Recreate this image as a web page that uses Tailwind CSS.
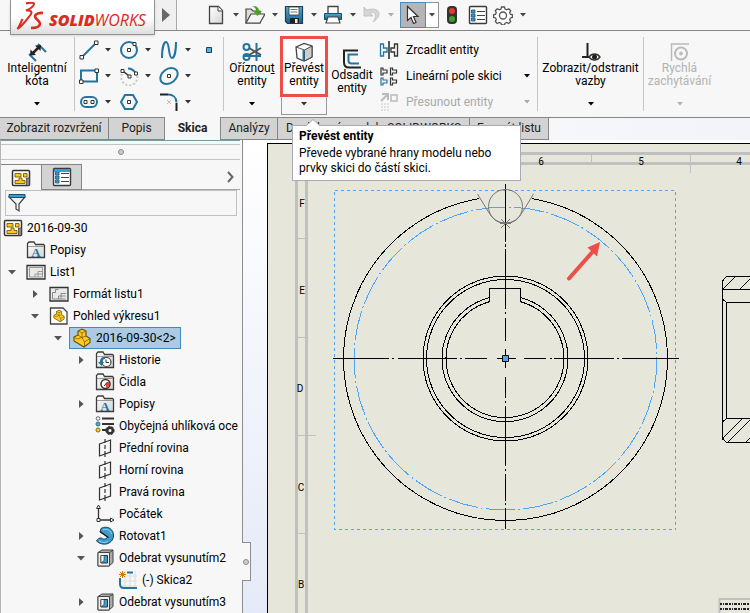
<!DOCTYPE html>
<html lang="cs">
<head>
  <meta charset="UTF-8" />
  <meta name="viewport" content="width=device-width, initial-scale=1.0" />
  <title>SOLIDWORKS</title>
  <script src="https://cdn.jsdelivr.net/npm/@tailwindcss/browser@4"></script>
  <style>
    body { font-family: Roboto, "Open Sans", sans-serif; }
  </style>
</head>
<body class="bg-[#f7f7f7] text-black text-xs min-h-screen flex flex-col overflow-hidden">

  <!-- shared icons -->
  <svg class="absolute size-0">
    <linearGradient id="blueFill" x1="0" y1="0" x2="0" y2="1"><stop offset="0" stop-color="#4fb0da" /><stop offset="1" stop-color="#17608a" /></linearGradient>
    <linearGradient id="paper" x1="0" y1="0" x2="1" y2="1"><stop offset="0" stop-color="#fff" /><stop offset="1" stop-color="#d5d5d5" /></linearGradient>
    <symbol id="down" viewBox="0 0 6 4"><path d="M0 0h6L3 3.6z" fill="currentColor" /></symbol>
    <symbol id="open" viewBox="0 0 8 5"><path d="M0 0h8L4 4.6z" fill="#555" /></symbol>
    <symbol id="closed" viewBox="0 0 5 8"><path d="M0 0v8L4.6 4z" fill="#555" /></symbol>
    <symbol id="folder" viewBox="0 0 20 20"><path d="M1.5 17.5V3.5L3 2h5l1.5 2.500H17.500l1 1v12z" fill="url(#paper)" stroke="#3c3c3c" stroke-width="1.300" /><path d="M2 6.500h16" stroke="#999" /></symbol>
    <symbol id="drawing" viewBox="0 0 20 20"><rect x="1.500" y="2.500" width="17" height="15" rx="1" fill="#fff" stroke="#333" stroke-width="1.500" /><path d="M4 5.500h6v3.500H4zM12.500 5.500h3.500v3.500h-3.500zM8 10h3v2.500h3v3H4v-3h4z" fill="#ffc916" stroke="#7b5a00" stroke-width=".9" /><path d="M15.500 10h3v7.500h-3z" fill="#888" stroke="#333" stroke-width=".7" /></symbol>
    <symbol id="part" viewBox="0 0 20 20"><path d="M2 9l4-2V3l4-2 4 2v5l4 2.500v4L12 19 2 13z" fill="#ffcb22" stroke="#6b4c00" stroke-width="1.100" /><path d="M6 7l4 2.500 4-1.500M10 9.500L12.500 14l5.500-3.500M12.500 14v5M2 9l3 2 5-1.500M6 3l4 2v4.500M10 5l4-2" fill="none" stroke="#805d00" stroke-width=".8" /></symbol>
    <symbol id="plane" viewBox="0 0 20 20"><path d="M4.500 6l11-4v12l-11 4zM10 1v4m0 2v4m0 2v6" fill="none" stroke="#333" stroke-width="1.200" /></symbol>
    <symbol id="cut" viewBox="0 0 20 20"><path d="M3 4.500L7 2h11v12.500L14 18H3z" fill="#aaa" stroke="#444" /><path d="M3 4.500h11.500V18H3z" fill="#eee" stroke="#444" /><path d="M6 7.500h6.500v7.500H6z" fill="#3b9dcb" stroke="#333" /><path d="M6 15l3-2.500V7.500H6z" fill="#fff" stroke="#333" stroke-width=".7" /><path d="M14.500 4.500L18 2" stroke="#444" /></symbol>
    <symbol id="letterA" viewBox="0 0 20 20"><use href="#folder" /><text x="10" y="16.500" text-anchor="middle" font-family="Liberation Serif, serif" font-weight="bold" font-size="13" fill="#22759f">A</text></symbol>
    <symbol id="list" viewBox="0 0 20 20"><rect x="1.500" y="1.500" width="17" height="17" rx="1" fill="#fff" stroke="#3a3a3a" stroke-width="1.400" /><path d="M9 6.500h8M9 10.500h8M9 14.500h8" stroke="#444" stroke-width="1.200" /><path d="M3.500 5h3.500v3H3.500zM3.500 9h3.500v3H3.500zM3.500 13h3.500v3H3.500z" fill="#3b9dcb" stroke="#174f70" stroke-width=".8" /></symbol>
  </svg>

  <header class="relative h-[31px] shrink-0 border-b border-[#858585] flex items-center">
    <div class="absolute left-[10px] top-0 z-10 h-[35px] w-[145px] border border-t-0 border-[#929292] bg-linear-to-b from-white from-50% to-[#dedede] flex items-end pb-1 pl-[5px] text-[#dc2a1e] shadow-sm">
      <svg class="w-7 h-7 shrink-0" viewBox="0 0 28 28" fill="none" stroke="#dc2a1e"><path d="M10 1.500C13 .5 18 0 18 2c0 2-4 5-8 6.500 5-.5 7 1 4 5-3 4-8 11-12.500 13.500 2-3 3.500-6.500 5-10" stroke-width="2" /><path d="M27 11c-4-.5-8 1-8 3.500s5 4 5 7-4 4.500-9 4.500" stroke-width="2.600" /></svg>
      <span class="text-base leading-5 italic pl-[5px] font-['Open_Sans']"><b class="font-extrabold">SOLID</b><span class="font-normal">WORKS</span></span>
    </div>
    <button aria-label="Nabídka" class="ml-[155px] w-[22px] h-[30px] border-r border-[#aaa] bg-[#f0f0f0] flex items-center justify-center"><svg class="w-[8px] h-[14px]" viewBox="0 0 8 14"><path d="M0 0v14l8-7z" fill="#686868" /></svg></button>

    <div class="ml-[29px] flex items-center text-[#444]">
      <button aria-label="Nový"><svg class="w-5 h-5" viewBox="0 0 20 20"><path d="M3.500 1.500h9l4 4v13h-13z" fill="url(#paper)" stroke="#444" stroke-width="1.300" /><path d="M12 1.500v4.500h4.500" fill="#fff" stroke="#444" /></svg></button>
      <button aria-label="Nový – možnosti" class="w-[19px] flex justify-center"><svg class="w-[6px] h-[4px]"><use href="#down" /></svg></button>
      <button aria-label="Otevřít"><svg class="w-5 h-5" viewBox="0 0 20 20"><path d="M1 18V4h5l2 2h7v12z" fill="#ddd" stroke="#444" stroke-width="1.200" /><path d="M1 18L6 9h14l-5 9z" fill="#f4f4f4" stroke="#444" stroke-width="1.200" /><path d="M7 1c5 0 7 2 7 5h3l-4.500 5L8 6h3c0-2-1-4-4-5z" fill="#4aa31c" /></svg></button>
      <button aria-label="Otevřít – možnosti" class="w-[19px] flex justify-center"><svg class="w-[6px] h-[4px]"><use href="#down" /></svg></button>
      <button aria-label="Uložit"><svg class="w-5 h-5" viewBox="0 0 20 20"><path d="M1.500 1.500h17v17h-15l-2-2z" fill="url(#blueFill)" stroke="#173f58" stroke-width="1.200" /><path d="M5 2h10v8H5z" fill="#fff" stroke="#333" stroke-width=".8" /><path d="M6.500 4.500h7M6.500 7h7" stroke="#777" /><path d="M6 13h9v5H6z" fill="#222" /><path d="M11 14h2.500v4H11z" fill="#eee" /></svg></button>
      <button aria-label="Uložit – možnosti" class="w-[19px] flex justify-center"><svg class="w-[6px] h-[4px]"><use href="#down" /></svg></button>
      <button aria-label="Tisk"><svg class="w-5 h-5" viewBox="0 0 20 20"><path d="M5 9V1.500h10V9" fill="#fff" stroke="#444" stroke-width="1.300" /><path d="M1.500 8.500h17v6h-17z" fill="url(#blueFill)" stroke="#174f70" /><path d="M5 12l-2 6h14l-2-6z" fill="#fff" stroke="#444" stroke-width="1.200" /></svg></button>
      <button aria-label="Tisk – možnosti" class="w-[19px] flex justify-center"><svg class="w-[6px] h-[4px]"><use href="#down" /></svg></button>
      <button aria-label="Zpět" disabled><svg class="w-5 h-5" viewBox="0 0 20 20"><path d="M2 2v9h9L8 8c5-2 8 2 3 9 10-6 7-16-6-12z" fill="#d6d6d6" stroke="#bbb" stroke-width=".8" /></svg></button>
      <button aria-label="Zpět – možnosti" disabled class="w-[18px] flex justify-center text-[#aaa]"><svg class="w-[6px] h-[4px]"><use href="#down" /></svg></button>
      <button aria-label="Vybrat" class="w-[26px] h-[26px] bg-[#b5b5b5] border border-[#4a8dbb] flex items-center justify-center"><svg class="w-5 h-5" viewBox="0 0 20 20"><path d="M4.500 1.500v14l3.500-3 2.500 6 2.500-1-2.500-6H15z" fill="#fff" stroke="#333" stroke-width="1.200" /></svg></button>
      <button aria-label="Vybrat – možnosti" class="w-[13px] h-[26px] border border-l-0 border-[#929292] bg-white flex items-center justify-center"><svg class="w-[6px] h-[4px]"><use href="#down" /></svg></button>
      <button aria-label="Obnovit" class="ml-[3px]"><svg class="w-5 h-5" viewBox="0 0 20 20"><rect x="5" y="1" width="10" height="18" rx="4" fill="#333" /><circle cx="10" cy="6" r="3" fill="#e8392b" /><circle cx="10" cy="14" r="3" fill="#39a32c" /></svg></button>
      <button aria-label="Vlastnosti" class="ml-[6px]"><svg class="w-5 h-5"><use href="#list" /></svg></button>
      <button aria-label="Možnosti" class="ml-[5px]"><svg class="w-5 h-5" viewBox="0 0 20 20" fill="#fff" stroke="#555" stroke-width="1.300"><path d="M8.500 2h3l.5 2 1.800.8 2-1.100 1.900 2-1 1.900.7 1.600 2 .6v2.600l-2 .6-.7 1.600 1 1.900-1.900 2-2-1.100-1.800.8-.5 1.800h-3l-.5-1.800-1.800-.8-2 1.100-1.900-2 1-1.900-.7-1.600-2-.6V9.800l2-.6.7-1.600-1-1.900 1.900-2 2 1.100L8 4z" /><circle cx="10" cy="10.500" r="3.500" /></svg></button>
      <button aria-label="Možnosti – nabídka" class="w-[19px] flex justify-center"><svg class="w-[6px] h-[4px]"><use href="#down" /></svg></button>
    </div>
  </header>

  <!-- ribbon -->
  <section class="h-[86px] shrink-0 flex leading-[13px] text-[#333]">
    <button class="w-[74px] flex flex-col items-center pt-[11px] text-black">
      <svg class="w-5 h-5" viewBox="0 0 20 20"><path d="M2 12l7 7M11 2l8 8" stroke="#22759f" stroke-width="2" /><path d="M5 12l7-7" stroke="#222" stroke-width="2.500" /><path d="M3 13.500l.5-6 5.500 5.500zM14 3l-.5 6L8 3.500z" fill="#222" /></svg>
      Inteligentní<br>kóta
      <svg class="w-[6px] h-[4px] mt-[14px]"><use href="#down" /></svg>
    </button>
    <div class="my-[6px] w-px bg-[#c6c6c6]"></div>

    <div class="grid grid-cols-[40px_40px_40px_24px] auto-rows-[26px] pt-[6px] pl-[4px]">
      <div class="flex items-center">
        <button aria-label="Přímka"><svg class="w-5 h-5" viewBox="0 0 20 20"><path d="M3 17L17 3" stroke="#22759f" stroke-width="2" /><path d="M1 15.500h3.500V19H1zM15.500 1H19v3.500h-3.500z" fill="#fff" stroke="#333" /></svg></button>
        <button aria-label="Přímka – možnosti" class="w-[18px] flex justify-center"><svg class="w-[6px] h-[4px]"><use href="#down" /></svg></button>
      </div>
      <div class="flex items-center">
        <button aria-label="Kružnice"><svg class="w-5 h-5" viewBox="0 0 20 20"><circle cx="10" cy="10" r="8" fill="none" stroke="#22759f" stroke-width="2" /><path d="M8.500 8.500h3v3h-3zM14 2.500h3v3h-3z" fill="#fff" stroke="#333" /></svg></button>
        <button aria-label="Kružnice – možnosti" class="w-[18px] flex justify-center"><svg class="w-[6px] h-[4px]"><use href="#down" /></svg></button>
      </div>
      <div class="flex items-center">
        <button aria-label="Splajn"><svg class="w-5 h-5" viewBox="0 0 20 20"><path d="M3 18C3 8 5 2 7 2c4 0 2 16 6 16 2 0 4-6 4-16" fill="none" stroke="#22759f" stroke-width="2" /></svg></button>
        <button aria-label="Splajn – možnosti" class="w-[18px] flex justify-center"><svg class="w-[6px] h-[4px]"><use href="#down" /></svg></button>
      </div>
      <button aria-label="Bod" class="flex items-center"><svg class="w-5 h-5" viewBox="0 0 20 20"><path d="M7.500 7.500h5v5h-5z" fill="#5ab2dc" stroke="#173f58" /></svg></button>

      <div class="flex items-center">
        <button aria-label="Obdélník"><svg class="w-5 h-5" viewBox="0 0 20 20"><path d="M2 4.500h16v11H2z" fill="none" stroke="#22759f" stroke-width="2" /><path d="M.5 14H4v3.500H.5zM16 3h3.500v3.500H16z" fill="#fff" stroke="#333" /></svg></button>
        <button aria-label="Obdélník – možnosti" class="w-[18px] flex justify-center"><svg class="w-[6px] h-[4px]"><use href="#down" /></svg></button>
      </div>
      <div class="flex items-center">
        <button aria-label="Oblouk"><svg class="w-5 h-5" viewBox="0 0 20 20"><path d="M3 8a8 8 0 1 0 15 1.500" fill="none" stroke="#c8c8c8" stroke-width="2" stroke-dasharray="2 2" /><path d="M9 2.500c4 0 6 2 8 5" fill="none" stroke="#22759f" stroke-width="2" /><path d="M4 5l6 5" stroke="#333" stroke-width="1.500" /><path d="M2 3.500h3v3H2zM9 9h3v3H9zM15.500 6h3v3h-3z" fill="#fff" stroke="#333" /></svg></button>
        <button aria-label="Oblouk – možnosti" class="w-[18px] flex justify-center"><svg class="w-[6px] h-[4px]"><use href="#down" /></svg></button>
      </div>
      <div class="flex items-center">
        <button aria-label="Elipsa"><svg class="w-5 h-5" viewBox="0 0 20 20"><ellipse cx="10" cy="10" rx="9.500" ry="7" transform="rotate(-38 10 10)" fill="none" stroke="#22759f" stroke-width="2" /><path d="M8.500 8.500h3v3h-3z" fill="#fff" stroke="#333" /></svg></button>
        <button aria-label="Elipsa – možnosti" class="w-[18px] flex justify-center"><svg class="w-[6px] h-[4px]"><use href="#down" /></svg></button>
      </div>
      <div></div>

      <div class="flex items-center">
        <button aria-label="Drážka"><svg class="w-5 h-5" viewBox="0 0 20 20"><rect x="2" y="5" width="16" height="10" rx="5" fill="none" stroke="#22759f" stroke-width="2" /><path d="M5 8.500h3v3H5zM12 8.500h3v3h-3z" fill="#fff" stroke="#333" /></svg></button>
        <button aria-label="Drážka – možnosti" class="w-[18px] flex justify-center"><svg class="w-[6px] h-[4px]"><use href="#down" /></svg></button>
      </div>
      <button aria-label="Mnohoúhelník" class="flex items-center"><svg class="w-5 h-5" viewBox="0 0 20 20"><path d="M6 3h8l4 7-4 7H6l-4-7z" fill="none" stroke="#22759f" stroke-width="2" /><path d="M8.500 8.500h3v3h-3z" fill="#fff" stroke="#333" /></svg></button>
      <div class="flex items-center">
        <button aria-label="Zaoblení"><svg class="w-5 h-5" viewBox="0 0 20 20" fill="none"><path d="M9 2.500c5 0 8.500 3 8.500 8" stroke="#22759f" stroke-width="2" /><path d="M1 2.500h8M17.500 11v8" stroke="#222" stroke-width="2" /><path d="M8 8l4 4m0-4l-4 4" stroke="#bbb" /></svg></button>
        <button aria-label="Zaoblení – možnosti" class="w-[18px] flex justify-center"><svg class="w-[6px] h-[4px]"><use href="#down" /></svg></button>
      </div>
    </div>
    <div class="my-[6px] w-px bg-[#c6c6c6]"></div>

    <button class="w-14 flex flex-col items-center pt-[11px] text-black">
      <svg class="w-5 h-5" viewBox="0 0 20 20" fill="none"><path d="M2 14h17M14.500 1v18" stroke="#22759f" stroke-width="2" /><circle cx="4.500" cy="5" r="3" stroke="#22759f" stroke-width="2" /><circle cx="4.500" cy="15" r="3" stroke="#22759f" stroke-width="2" /><path d="M7 6l12 7M7 13l12-7" stroke="#555" stroke-width="2" /></svg>
      <span>Oříznou<u>t</u><br>entity</span>
      <svg class="w-[6px] h-[4px] mt-[14px]"><use href="#down" /></svg>
    </button>
    <div class="w-12 pt-[5px] flex flex-col items-center">
      <button class="w-full h-[61px] border-3 border-[#ef4d47] bg-[#fdfdfd] text-black flex flex-col items-center pt-[3px]">
        <svg class="w-5 h-5" viewBox="0 0 20 20"><path d="M2 5l8-3.500L18 4v11l-8 4-7-3z" fill="#fff" stroke="#444" stroke-width="1.300" /><path d="M10.500 8L18 4v11l-7.500 4z" fill="#ccc" stroke="#444" /><path d="M2 5l8.500 3" stroke="#555" /><path d="M9.500 8v11" stroke="#22759f" stroke-width="2" /></svg>
        <span>Převést<br>entity</span>
      </button>
      <button aria-label="Převést entity – možnosti" class="w-[46px] h-[18px] border border-t-0 border-[#999] flex items-center justify-center pb-1"><svg class="w-[6px] h-[4px]"><use href="#down" /></svg></button>
    </div>
    <button class="w-12 flex flex-col items-center pt-[18px] text-black">
      <svg class="w-5 h-5" viewBox="0 0 20 20" fill="none"><path d="M16 1.500H2v12c0 3 2 5 5 5h12" stroke="#222" stroke-width="2" /><path d="M16 5.500H6.500v6c0 2 1 3 3 3H17" stroke="#22759f" stroke-width="2" /></svg>
      <span>Odsadit<br>entity</span>
    </button>
    <div class="w-[161px] pt-[6px] pl-[3px] text-black">
      <button class="h-[26px] flex items-center gap-[7px]">
        <svg class="w-5 h-5" viewBox="0 0 20 20" fill="none" stroke-width="1.300"><path d="M1.500 4v12h3v-4H8V8H4.500V4z" stroke="#22759f" /><path d="M18.500 4v12h-3v-4H12V8h3.500V4z" stroke="#333" /><path d="M10 1v18" stroke="#222" stroke-width="1.500" /></svg>
        Zrcadlit entity
      </button>
      <div class="h-[26px] flex items-center justify-between pr-[7px]">
        <button class="flex items-center gap-[7px]">
          <svg class="w-5 h-5" viewBox="0 0 20 20" fill="none" stroke-width="1.200"><path d="M2 12v7h2v-2h4v-3H4v-2z" stroke="#22759f" /><path d="M2 2v7h2V7h4V4H4V2zM11.500 2v7h2V7h4V4h-4V2zM11.500 12v7h2v-2h4v-3h-4v-2z" stroke="#333" /></svg>
          Lineární pole skici
        </button>
        <button aria-label="Lineární pole – možnosti"><svg class="w-[6px] h-[4px]"><use href="#down" /></svg></button>
      </div>
      <div class="h-[26px] flex items-center justify-between pr-[7px] text-[#a9a9a9]">
        <button disabled class="flex items-center gap-[7px]">
          <svg class="w-5 h-5" viewBox="0 0 20 20" fill="none"><path d="M2 9l6-6M3 2h6v6" stroke="#bbb" stroke-width="2" /><path d="M12 3h6v6h-6z" stroke="#bbb" stroke-width="1.500" /><path d="M2 12h8M2 15h8M2 18h8" stroke="#ccc" stroke-dasharray="2 1" /></svg>
          Přesunout entity
        </button>
        <button disabled aria-label="Přesunout – možnosti"><svg class="w-[6px] h-[4px]"><use href="#down" /></svg></button>
      </div>
    </div>
    <div class="my-[6px] w-px bg-[#c6c6c6]"></div>
    <button class="w-[105px] flex flex-col items-center pt-[11px] text-black">
      <svg class="w-5 h-5" viewBox="0 0 20 20" fill="none"><path d="M6.500 1v14M1 15h8" stroke="#222" stroke-width="2" /><path d="M8 15c3-4 8-4 11 0-3 4-8 4-11 0z" fill="#fff" stroke="#333" stroke-width="1.300" /><circle cx="13.500" cy="15" r="2.500" fill="#222" /></svg>
      <span>Zobrazit/odstranit<br>vazby</span>
      <svg class="w-[6px] h-[4px] mt-[14px]"><use href="#down" /></svg>
    </button>
    <div class="my-[6px] w-px bg-[#c6c6c6]"></div>
    <button disabled class="w-[71px] flex flex-col items-center pt-[11px] text-[#b3b3b3]">
      <svg class="w-5 h-5" viewBox="0 0 20 20" fill="none" stroke="#bbb"><path d="M1.500 19V2H19" stroke-width="1.500" /><circle cx="11" cy="11.500" r="6" stroke-width="2" /><circle cx="11" cy="11.500" r="1.500" fill="#bbb" /></svg>
      <span>Rychlá<br>zachytávání</span>
      <svg class="w-[6px] h-[4px] mt-[14px]"><use href="#down" /></svg>
    </button>
  </section>

  <!-- command tabs, with the tooltip hanging over them -->
  <nav class="relative h-[23px] shrink-0 flex bg-linear-to-r from-white to-[#f2f4f9] border-t border-[#858585] text-[#222] leading-[21px]">
    <button class="w-[109px] bg-[#d3d3d3] border-r border-b border-[#858585] whitespace-nowrap">Zobrazit rozvržení</button>
    <button class="w-[56px] bg-[#d3d3d3] border-r border-b border-[#858585]">Popis</button>
    <button class="w-[55px] -mt-px bg-[#f7f7f7] font-bold">Skica</button>
    <button class="w-[58px] bg-[#d3d3d3] border-x border-b border-[#858585]">Analýzy</button>
    <button class="w-[192px] bg-[#d3d3d3] border-r border-b border-[#858585] whitespace-nowrap">Doplňkové moduly SOLIDWORKS</button>
    <button class="w-[79px] bg-[#d3d3d3] border-r border-b border-[#858585] whitespace-nowrap">Formát listu</button>
    <div role="tooltip" class="absolute z-20 left-[292px] top-[7px] w-[229px] h-[56px] bg-white border border-[#a9aab4] px-[6px] pt-[3px] text-black leading-[15px]">
      <svg class="absolute left-[13px] -top-[7px] w-[14px] h-[8px]" viewBox="0 0 14 8"><path d="M0 7l7-6.500L14 7v1H0z" fill="#fff" /><path d="M0 7l7-6.500L14 7" fill="none" stroke="#a9aab4" /></svg>
      <b class="block mb-[2px]">Převést entity</b>
      <p class="whitespace-nowrap">Převede vybrané hrany modelu nebo<br>prvky skici do částí skici.</p>
    </div>
  </nav>

  <main class="flex-1 flex min-h-[473px] bg-linear-to-b from-white to-[#e6eaf8]">
    <aside class="relative w-[243px] shrink-0 bg-[#f7f7f7] border-r border-[#8d8d8d] border-l border-l-[#b5b5b5]">
      <div class="h-5 mr-[2px] border-t border-b border-t-[#7c9aa5] border-b-[#c4c4c4] pt-[3px]">
        <div class="border-t border-[#c4c4c4] flex justify-center pt-[4px]"><span class="size-[6px] rounded-full border border-[#8a8a8a] bg-[#ccc]"></span></div>
      </div>
      <div class="mt-1 h-[26px] mr-[2px] flex border-b border-[#a5a5a5]">
        <button aria-label="Strom prvků" class="w-[41px] h-[26px] border-t border-r border-[#858585] bg-[#f7f7f7] flex items-center justify-center"><svg class="w-5 h-5"><use href="#drawing" /></svg></button>
        <button aria-label="Správce vlastností" class="w-[40px] h-[26px] border border-l-0 border-[#858585] bg-[#d3d3d3] flex items-center justify-center"><svg class="w-5 h-5"><use href="#list" /><path d="M2 2h16v3H2z" fill="#3b9dcb" /></svg></button>
        <button aria-label="Další karty" class="ml-auto w-5 flex items-center justify-center"><svg class="w-[7px] h-[12px]" viewBox="0 0 7 12"><path d="M1 1l4.500 5L1 11" fill="none" stroke="#666" stroke-width="2" /></svg></button>
      </div>
      <label class="mx-1 mr-[5px] h-[26px] border border-[#c0c0c0] flex items-center pl-[2px]">
        <svg class="w-[18px] h-5 shrink-0" viewBox="0 0 18 20"><path d="M1 4h16l-6 7v7l-3-2v-5z" fill="#f2f2f2" stroke="#444" stroke-width="1.200" /><path d="M1 1.500h16v3H1z" fill="#3b9dcb" stroke="#174f70" /></svg>
        <input aria-label="Filtr" class="flex-1 min-w-0 h-full bg-transparent outline-none px-1">
      </label>

      <div class="overflow-hidden mt-px mr-[2px] pl-[2px] leading-[22px] whitespace-nowrap">
        <div class="h-[22px] flex items-center gap-1"><svg class="w-5 h-5 shrink-0"><use href="#drawing" /></svg>2016-09-30</div>
        <ul>
          <li class="h-[22px] flex items-center gap-1 pl-[23px]"><svg class="w-5 h-5 shrink-0"><use href="#letterA" /></svg>Popisy</li>
          <li>
            <div class="h-[22px] flex items-center gap-1"><span class="w-[19px] flex justify-center pr-px"><svg class="w-2 h-[5px]"><use href="#open" /></svg></span><svg class="w-5 h-5 shrink-0" viewBox="0 0 20 20"><path d="M1 3.500h18v13.500H1z" fill="#e9e9e9" stroke="#333" stroke-width="1.300" /><path d="M3.500 5.500h13V15h-13zM9 15v-3h8M12 12v3M12 12V9.500h5" fill="none" stroke="#999" /></svg>List1</div>
            <ul class="pl-[23px]">
              <li class="h-[22px] flex items-center gap-1"><span class="w-[19px] flex justify-center pr-px"><svg class="w-[5px] h-2"><use href="#closed" /></svg></span><svg class="w-5 h-5 shrink-0" viewBox="0 0 20 20"><path d="M1 3.500h18v13.500H1z" fill="#e9e9e9" stroke="#333" stroke-width="1.300" /><path d="M3.500 15V8.500h3v-3h3M9.500 15v-3h7M12 12v3M12 12V9.500h5M3.500 15h13" fill="none" stroke="#888" /></svg>Formát listu1</li>
              <li>
                <div class="h-[22px] flex items-center gap-1"><span class="w-[19px] flex justify-center pr-px"><svg class="w-2 h-[5px]"><use href="#open" /></svg></span><svg class="w-5 h-5 shrink-0" viewBox="0 0 20 20"><path d="M1.500 2h12.500l4 4v12h-16.500z" fill="#fff" stroke="#444" stroke-width="1.300" /><use href="#part" x="3.500" y="3.500" width="13" height="13" /></svg>Pohled výkresu1</div>
                <ul class="pl-[23px]">
                  <li>
                    <div class="h-[22px] flex items-center"><span class="w-[20px] flex justify-center pr-[2px]"><svg class="w-2 h-[5px]"><use href="#open" /></svg></span><span class="h-[22px] border border-[#4389bd] bg-[#abcbe5] flex items-center gap-1 pl-[2px] pr-1"><svg class="w-5 h-5 shrink-0"><use href="#part" /></svg>2016-09-30&lt;2&gt;</span></div>
                    <ul class="pl-[23px]">
                      <li class="h-[22px] flex items-center gap-1"><span class="w-[19px] flex justify-center pr-px"><svg class="w-[5px] h-2"><use href="#closed" /></svg></span><svg class="w-5 h-5 shrink-0" viewBox="0 0 20 20"><use href="#folder" /><circle cx="11.500" cy="12" r="4.500" fill="#fff" stroke="#444" stroke-width="1.200" /><path d="M11 9.500v3h3" fill="none" stroke="#333" /><path d="M10 7c-4 0-5 2-5 5H3l3.500 4L9 12H7c0-2 1-3 3-3z" fill="#22759f" /></svg>Historie</li>
                      <li class="h-[22px] flex items-center gap-1 pl-[23px]"><svg class="w-5 h-5 shrink-0" viewBox="0 0 20 20"><use href="#folder" /><circle cx="10.500" cy="12" r="4.500" fill="#fff" stroke="#333" stroke-width="1.500" /><path d="M10.500 12L14 9v5l-3 2z" fill="#e2462d" /><path d="M9 14l3.500-4" stroke="#333" /></svg>Čidla</li>
                      <li class="h-[22px] flex items-center gap-1"><span class="w-[19px] flex justify-center pr-px"><svg class="w-[5px] h-2"><use href="#closed" /></svg></span><svg class="w-5 h-5 shrink-0"><use href="#letterA" /></svg>Popisy</li>
                      <li class="h-[22px] flex items-center gap-1 pl-[23px]"><svg class="w-5 h-5 shrink-0" viewBox="0 0 20 20"><path d="M7 2.500h12M7 8h12M7 14h6" stroke="#333" stroke-width="2" /><circle cx="3" cy="2.500" r="1.800" fill="#fff" stroke="#666" /><circle cx="3" cy="8" r="2" fill="#55b1dc" stroke="#1f6a92" /><circle cx="3" cy="14" r="2" fill="#ffd633" stroke="#886600" /><circle cx="15" cy="14.500" r="2.800" fill="#fff" stroke="#333" stroke-width="2.500" /><circle cx="15" cy="14.500" r="4.200" fill="none" stroke="#333" stroke-dasharray="2 1.500" /></svg>Obyčejná uhlíková oce</li>
                      <li class="h-[22px] flex items-center gap-1 pl-[23px]"><svg class="w-5 h-5 shrink-0"><use href="#plane" /></svg>Přední rovina</li>
                      <li class="h-[22px] flex items-center gap-1 pl-[23px]"><svg class="w-5 h-5 shrink-0"><use href="#plane" /></svg>Horní rovina</li>
                      <li class="h-[22px] flex items-center gap-1 pl-[23px]"><svg class="w-5 h-5 shrink-0"><use href="#plane" /></svg>Pravá rovina</li>
                      <li class="h-[22px] flex items-center gap-1 pl-[23px]"><svg class="w-5 h-5 shrink-0" viewBox="0 0 20 20" fill="#fff" stroke="#333"><path d="M3.500 4v12H16" fill="none" stroke-width="1.300" /><path d="M1.500 4.500L3.500 1l2 3.500zM15.500 14l3.500 2-3.500 2zM2 14.500h3v3H2z" /></svg>Počátek</li>
                      <li class="h-[22px] flex items-center gap-1"><span class="w-[19px] flex justify-center pr-px"><svg class="w-[5px] h-2"><use href="#closed" /></svg></span><svg class="w-5 h-5 shrink-0" viewBox="0 0 20 20"><path d="M6 2.500C12-1 19 3 18.500 10 18 18 8 21 1.500 15c1-2 3-3.500 5-3 2 2 5 1 6-1L5 6z" fill="#3b9dcb" stroke="#173f58" /><path d="M5 5.500l8.500 6" stroke="#222" stroke-width="1.500" /><path d="M8 4c4-2 8 1 8.500 4M4 15c3 2 7 2 9 0" fill="none" stroke="#9bd5f0" /></svg>Rotovat1</li>
                      <li>
                        <div class="h-[22px] flex items-center gap-1"><span class="w-[19px] flex justify-center pr-px"><svg class="w-2 h-[5px]"><use href="#open" /></svg></span><svg class="w-5 h-5 shrink-0"><use href="#cut" /></svg>Odebrat vysunutím2</div>
                        <div class="h-[22px] flex items-center gap-1 pl-[46px]"><svg class="w-5 h-5 shrink-0" viewBox="0 0 20 20" fill="none"><path d="M7 1v18M12 1v18M17 1v18M2 6h17M2 11h17M2 16h17" stroke="#ddd" /><path d="M9 2.500h6M2 8v6c0 3 1 4 4 4h13" stroke="#22759f" stroke-width="2" /><path d="M4.500 1v7M1 4.500h7M2 2l5 5M7 2L2 7" stroke="#c97a10" /></svg>(-) Skica2</div>
                      </li>
                      <li class="h-[22px] flex items-center gap-1"><span class="w-[19px] flex justify-center pr-px"><svg class="w-[5px] h-2"><use href="#closed" /></svg></span><svg class="w-5 h-5 shrink-0"><use href="#cut" /></svg>Odebrat vysunutím3</li>
                    </ul>
                  </li>
                </ul>
              </li>
            </ul>
          </li>
        </ul>
      </div>
      <!-- splitter handle -->
      <div class="absolute -right-[9px] top-[402px] w-[9px] h-[39px] border border-l-0 border-[#8d8d8d] bg-[#f7f7f7] flex items-center justify-center"><span class="size-[6px] shrink-0 rounded-full border border-[#8a8a8a] bg-[#ccc]"></span></div>
    </aside>

    <!-- drawing sheet -->
    <section class="ml-6 mt-[3px] flex-1 min-w-0 border-l border-t border-black bg-[#e6e6da]">
      <svg class="block w-full h-full" fill="none" stroke="#000" aria-label="Výkres">
        <g transform="translate(-268 -144)">
          <path d="M296.500 613V153.500H2000M306.500 613V163.500H2000" stroke="#c0c0c0" stroke-width="3" />
          <path d="M298 238.500h7M298 337.500h7M298 435.500h18M298 533.500h7M591.500 155v7M690.500 155v18" stroke="#c0c0c0" />
          <g fill="#000" stroke="none" font-size="10" text-anchor="middle">
            <text x="302" y="207">F</text><text x="302" y="294">E</text><text x="300" y="392">D</text><text x="301" y="491">C</text><text x="301" y="588">B</text>
            <text x="541" y="165">6</text><text x="641" y="165">5</text><text x="739" y="165">4</text>
          </g>
          <g shape-rendering="crispEdges">
            <path d="M334.500 190.500h341v339h-341z" stroke="#4ca6ff" stroke-dasharray="3 3" />
            <path d="M479 198.700A162 162 0 1 0 532 198.700" />
            <circle cx="505.500" cy="358.500" r="151.500" stroke="#4ca6ff" stroke-dasharray="30 3 2 3" />
            <circle cx="505.500" cy="358.500" r="82.500" /><circle cx="505.500" cy="358.500" r="79" />
            <path d="M489.500 297.600A63 63 0 1 0 520.500 297.600M489.500 301.700A59 59 0 1 0 520.500 301.700M489.500 302V288.500h31V302" />
            <path d="M333 358.500h56m3 0h2m4 0h59m3 0h2m3 0h22m10 0h19m8 0h22m4 0h2m2 0h60m3 0h2m3 0h57" />
            <path d="M505.500 184v58m0 2v3m0 2v60m0 3v2m0 4v23m0 8v19m0 9v21m0 3v2m0 3v60m0 3v2m0 3v27m0 2v2m0 3v21" />
            <path d="M722.500 440V281l4-4.500H760M722 289.500h40M722.500 299l4 3.500H760M726.500 302V418.500H760M722.500 422l4-3.500M722.500 438l4 4.500H760M723 289l12-12M740 289l12-12M723 438l19-19M728 442l23-23M746 442l8-8" />
          </g>
          <g stroke="#777"><circle cx="505.500" cy="206.500" r="17" /><path d="M477.500 194l11 18q6 11 17 11t17-11l11-18M501 219l9 9M510 219l-9 9M500 223.500h11" /></g>
          <path d="M502.500 355.500h6v6h-6z" fill="#4ca6ff" />
          <path d="M569 278.500l23-26" stroke="#ee4e48" stroke-width="4" stroke-linecap="round" /><path d="M600 242l-12.500 5.500 9.500 9z" fill="#ee4e48" stroke="none" />
          <path d="M719.500 630V599H780" stroke="#c0c0c0" stroke-width="2" />
          <path d="M720 604h40M720 609h40" stroke="#222" stroke-width="2" stroke-dasharray="2 1 1 1 3 1" />
        </g>
      </svg>
    </section>
  </main>
</body>
</html>
